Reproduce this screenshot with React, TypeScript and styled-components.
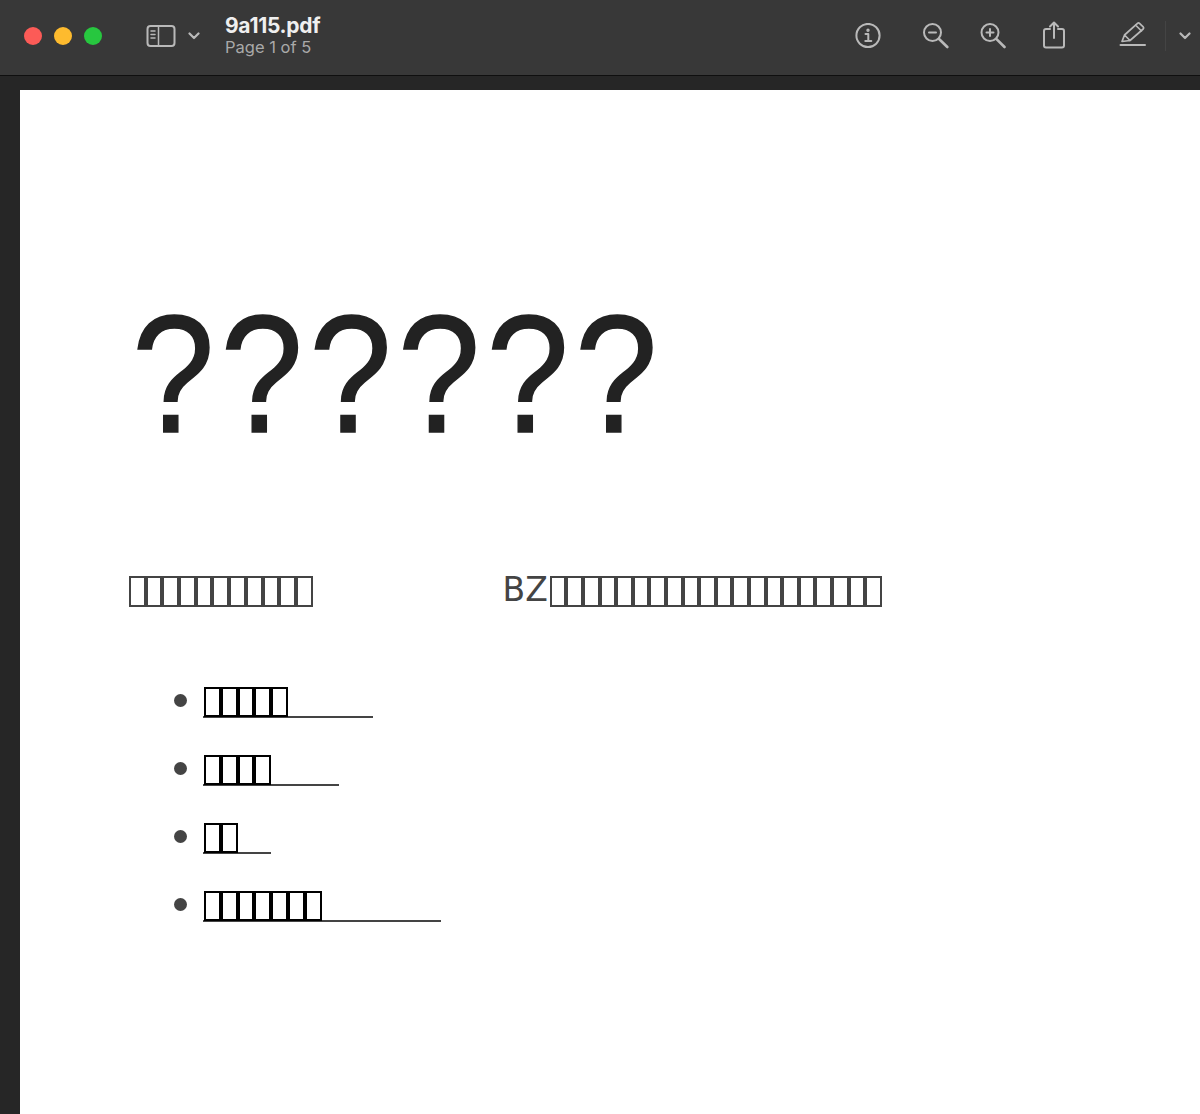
import React from "react";
import styled, { createGlobalStyle } from "styled-components";

const Global = createGlobalStyle`
  html, body { margin: 0; padding: 0; background: #262626; }
  body { font-family: "Inter", "Liberation Sans", sans-serif; }
`;

const Window = styled.div`
  width: 1200px;
  height: 1114px;
  overflow: hidden;
  display: flex;
  flex-direction: column;
  background: #262626;
`;

const TitleBar = styled.header`
  height: 75px;
  flex: none;
  box-sizing: content-box;
  display: flex;
  align-items: center;
  background: #383838;
  border-bottom: 1px solid #0f0f0f;
  padding-left: 24px;
  color: #b9b9b9;
`;

const BarRow = styled.div`
  display: flex;
  align-items: center;
  flex: 1;
  margin-top: -4px;
`;

const Lights = styled.div`
  display: flex;
  gap: 12px;
`;

const Light = styled.span<{ $c: string }>`
  width: 18px;
  height: 18px;
  border-radius: 50%;
  background: ${(p) => p.$c};
`;

const SidebarToggle = styled.div`
  display: flex;
  align-items: center;
  margin-left: 44px;
  gap: 12px;
`;

const TitleBlock = styled.div`
  margin-left: 25px;
  display: flex;
  flex-direction: column;
`;

const FileName = styled.div`
  font-size: 21px;
  line-height: 24px;
  font-weight: 700;
  color: #efefef;
  letter-spacing: -0.3px;
`;

const PageInfo = styled.div`
  font-size: 16.5px;
  line-height: 19px;
  color: #a9a9a9;
`;

const Tools = styled.div`
  margin-left: auto;
  margin-right: 9px;
  display: flex;
  align-items: center;
`;

const Tool = styled.div<{ $gap: number }>`
  margin-left: ${(p) => p.$gap}px;
  display: flex;
  align-items: center;
`;

const Divider = styled.span`
  width: 1px;
  height: 30px;
  margin-left: 18px;
  background: #444;
`;

const Workspace = styled.main`
  flex: 1;
  padding: 14px 0 0 20px;
  min-height: 0;
`;

const Sheet = styled.article`
  background: #fff;
  height: 100%;
  padding-top: 192px;
  padding-left: 109px;
  box-sizing: border-box;
`;

const Title = styled.h1`
  margin: 0 0 0 3px;
  font-family: "Liberation Sans", Arial, sans-serif;
  font-weight: 400;
  font-size: 167px;
  line-height: 184px;
  letter-spacing: 6.9px;
  color: #222;
  -webkit-text-stroke: 1.6px #222;
  white-space: nowrap;
  transform: scaleX(0.888);
  transform-origin: 0 0;
`;

const Lead = styled.div`
  margin-top: 105px;
  display: flex;
  align-items: center;
  height: 40px;
  color: #444;
  font-family: "DejaVu Sans", sans-serif;
  font-size: 33px;
`;

const Latin = styled.span`
  margin-left: 190px;
  margin-right: 2px;
  position: relative;
  top: -2px;
`;

const TofuRun = styled.span`
  display: inline-flex;
`;

const Tofu = styled.span<{ $w: number; $h: number; $c: string }>`
  width: ${(p) => p.$w}px;
  height: ${(p) => p.$h}px;
  box-sizing: border-box;
  border: 2px solid ${(p) => p.$c};
`;

const Links = styled.ul`
  list-style: none;
  margin: 73px 0 0 -9px;
  padding: 0;
  display: flex;
  flex-direction: column;
  gap: 34.33px;
`;

const Item = styled.li`
  height: 34px;
  display: flex;
  align-items: center;
`;

const Bullet = styled.span`
  width: 13px;
  height: 13px;
  border-radius: 50%;
  background: #444;
  margin-left: 54px;
  margin-right: 16px;
  margin-top: -2px;
`;

const LinkText = styled.a<{ $w: number }>`
  display: block;
  width: ${(p) => p.$w}px;
  height: 33px;
  border-bottom: 2px solid #444;
  box-sizing: border-box;
  padding-left: 1px;
  padding-top: 2px;
`;

const Boxes = ({ n, w, h, c }: { n: number; w: number; h: number; c: string }) => (
  <TofuRun>
    {Array.from({ length: n }).map((_, i) => (
      <Tofu key={i} $w={w} $h={h} $c={c} />
    ))}
  </TofuRun>
);

const Icon = ({ w, h, children }: { w: number; h: number; children: React.ReactNode }) => (
  <svg width={w} height={h} viewBox={`0 0 ${w} ${h}`} fill="none" stroke="#b9b9b9" strokeWidth="2" strokeLinecap="round" strokeLinejoin="round">
    {children}
  </svg>
);

const Chevron = () => (
  <Icon w={12} h={8}>
    <path d="M1.5 1.5 6 6l4.5-4.5" strokeWidth="2.2" />
  </Icon>
);

export default function App() {
  return (
    <Window>
      <Global />
      <TitleBar>
        <BarRow>
          <Lights>
            <Light $c="#fc5b57" />
            <Light $c="#febb2e" />
            <Light $c="#27c73f" />
          </Lights>
          <SidebarToggle>
            <Icon w={30} h={24}>
              <rect x="1.5" y="2" width="27" height="20" rx="3" />
              <path d="M12.5 2v20M5 7h4M5 10.5h4M5 14h4" strokeWidth="1.5" />
            </Icon>
            <Chevron />
          </SidebarToggle>
          <TitleBlock>
            <FileName>9a115.pdf</FileName>
            <PageInfo>Page 1 of 5</PageInfo>
          </TitleBlock>
          <Tools>
            <Tool $gap={0}>
              <Icon w={26} h={26}>
                <circle cx="13" cy="12.5" r="11.6" />
                <path d="M10.5 11H13.3V18M10.3 18H16.3" />
                <circle cx="13" cy="7.3" r="0.7" fill="#b9b9b9" />
              </Icon>
            </Tool>
            <Tool $gap={42}>
              <Icon w={26} h={26}>
                <circle cx="9.5" cy="9.5" r="8.5" />
                <path d="M6 9.5h7" />
                <path d="M15.8 15.8 24.3 24" strokeWidth="2.6" />
              </Icon>
            </Tool>
            <Tool $gap={31}>
              <Icon w={26} h={26}>
                <circle cx="10" cy="9.5" r="8.5" />
                <path d="M6.5 9.5h7M10 6v7" />
                <path d="M16.3 15.8 24.5 24" strokeWidth="2.6" />
              </Icon>
            </Tool>
            <Tool $gap={36}>
              <Icon w={24} h={30}>
                <path d="M8 8H4a2 2 0 0 0-2 2v14.5a2 2 0 0 0 2 2h16a2 2 0 0 0 2-2V10a2 2 0 0 0-2-2H16M12 17V1.5M8 5.5l4-4 4 4" />
              </Icon>
            </Tool>
            <Tool $gap={53}>
              <Icon w={28} h={30}>
                <path d="M3 20.5 5.5 14 18.5 2.3a1.5 1.5 0 0 1 2 0l3.7 3.6a1.5 1.5 0 0 1 0 2.1L11 19.5 3 20.5ZM5.5 14l5.5 5.5M16.5 4l6 6" strokeWidth="1.7" />
                <path d="M1.5 24h24.5" />
              </Icon>
            </Tool>
            <Divider />
            <Tool $gap={13}>
              <Chevron />
            </Tool>
          </Tools>
        </BarRow>
      </TitleBar>
      <Workspace>
        <Sheet>
          <Title>??????</Title>
          <Lead>
            <Boxes n={11} w={16.7} h={31} c="#444" />
            <Latin>BZ</Latin>
            <Boxes n={20} w={16.6} h={31} c="#444" />
          </Lead>
          <Links>
            <Item>
              <Bullet />
              <LinkText $w={170}><Boxes n={5} w={16.8} h={30} c="#000" /></LinkText>
            </Item>
            <Item>
              <Bullet />
              <LinkText $w={136}><Boxes n={4} w={16.8} h={30} c="#000" /></LinkText>
            </Item>
            <Item>
              <Bullet />
              <LinkText $w={68}><Boxes n={2} w={16.8} h={30} c="#000" /></LinkText>
            </Item>
            <Item>
              <Bullet />
              <LinkText $w={238}><Boxes n={7} w={16.8} h={30} c="#000" /></LinkText>
            </Item>
          </Links>
        </Sheet>
      </Workspace>
    </Window>
  );
}
